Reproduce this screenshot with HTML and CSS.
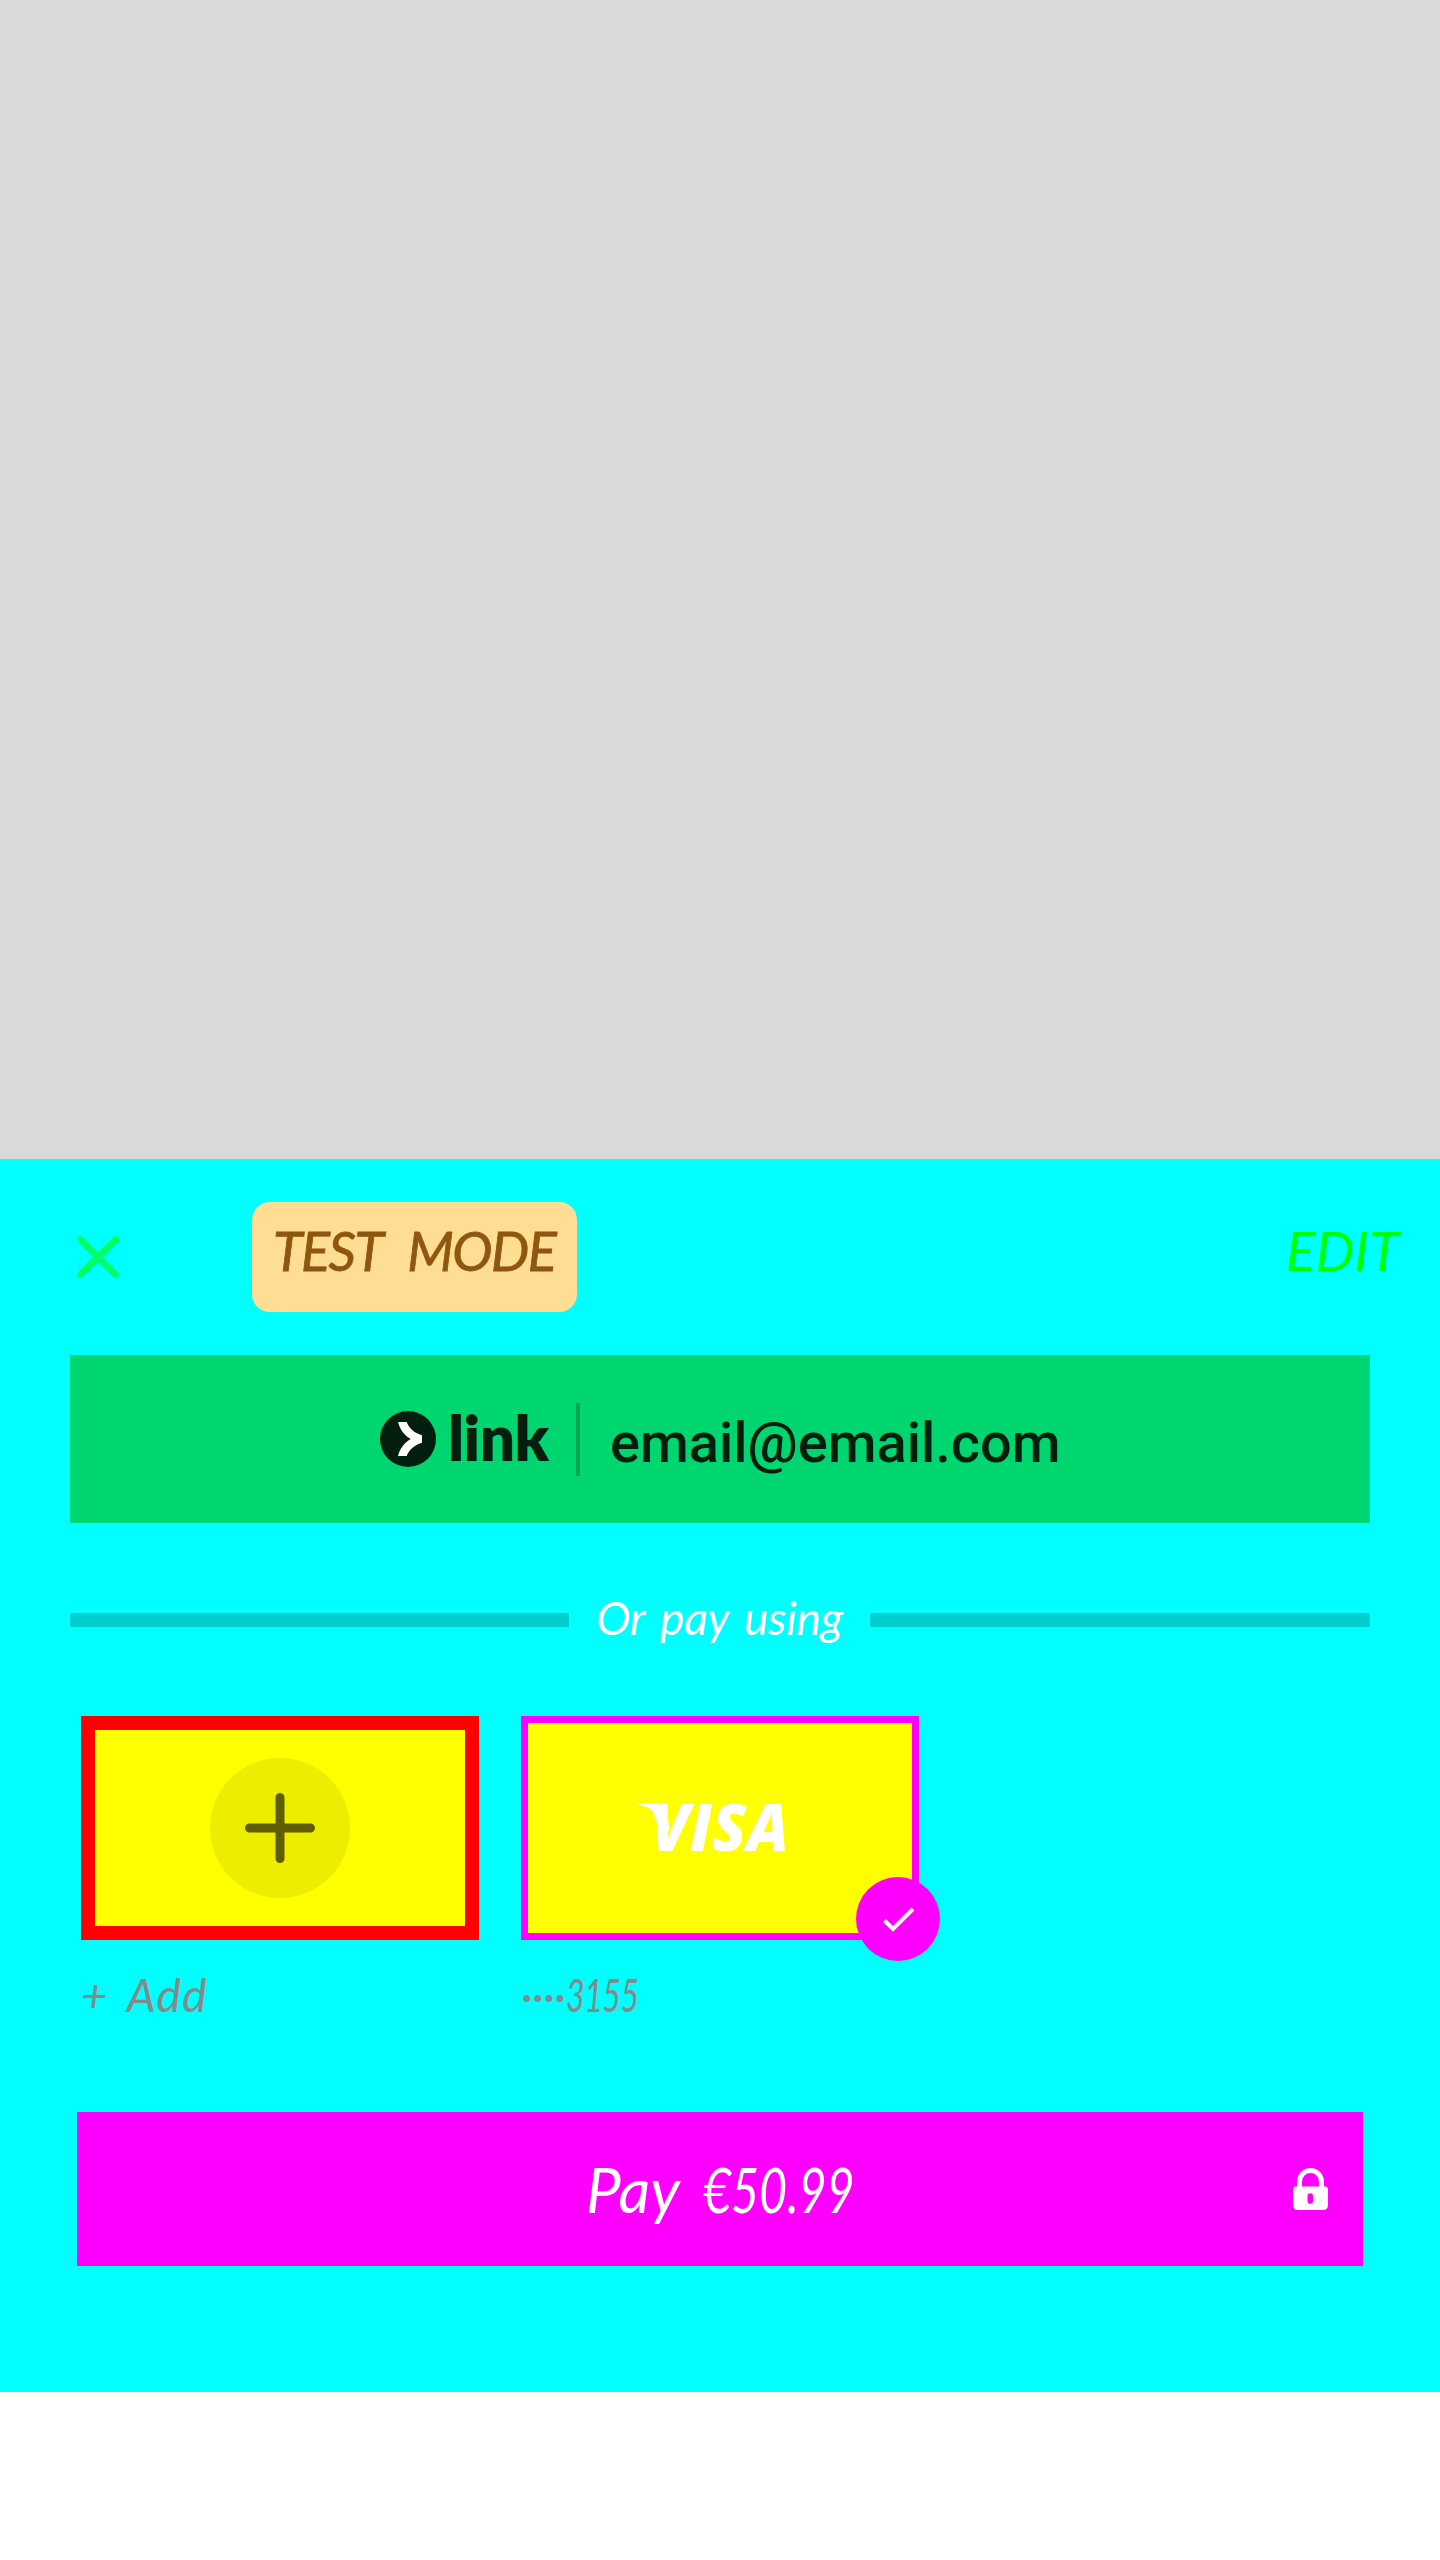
FILE: index.html
```html
<!DOCTYPE html>
<html lang="en">
<head>
<meta charset="utf-8">
<title>Payment sheet</title>
<link rel="stylesheet" href="styles.css">
</head>
<body>
<div class="scrim"></div>
<main class="sheet">
  <header class="topbar">
    <svg class="close" viewBox="0 0 42 42"><path d="M3.500 3.500 38.500 38.500M38.500 3.500 3.500 38.500"/></svg>
    <span class="badge script">TEST MODE</span>
    <span class="edit script">EDIT</span>
  </header>
  <div class="link-button">
    <svg class="link-mark" viewBox="0 0 56 56"><circle cx="28" cy="28" r="28" fill="#011e0f"/><path d="M18 11h8.700c2.300 6 7.300 11 15.300 13.300v7.400c-8 2.300-13 7.300-15.300 13.300H18c1.700-7 6-13 12.700-17C24 24 19.700 18 18 11z" fill="#fff"/></svg>
    <span class="link-word">link</span>
    <span class="link-rule"></span>
    <span class="email">email@email.com</span>
  </div>
  <div class="divider"><i class="line"></i><span class="or script">Or pay using</span><i class="line"></i></div>
  <div class="methods">
    <div class="method">
      <div class="card add">
        <svg class="plus" viewBox="0 0 140 140"><circle cx="70" cy="70" r="70" fill="#eded00"/><path d="M39.500 70h61M70 39.500v61"/></svg>
      </div>
      <span class="label label-add script">+ Add</span>
    </div>
    <div class="method">
      <div class="card selected">
        <svg class="visa" viewBox="0 0 152 50"><path d="M0 1H22Q27 1 28 7L32 28 22 28 15 10Q13 5 0 2.500z"/><text x="13" y="48.500" textLength="138" lengthAdjust="spacingAndGlyphs">VISA</text></svg>
        <svg class="check" viewBox="0 0 84 84"><circle cx="42" cy="42" r="42" fill="#f0f"/><path d="M28.500 43.500 37 52 57 32"/></svg>
      </div>
      <span class="label label-card script">····<span class="digits">3155</span></span>
    </div>
  </div>
  <div class="pay">
    <div class="pay-text script"><span>Pay</span><span class="amount">€50.99</span></div>
    <svg class="lock" viewBox="0 0 35 42"><path d="M6.500 20V13.500a11 11 0 0 1 22 0V20" fill="none" stroke="#fff" stroke-width="5"/><path fill="#fff" fill-rule="evenodd" d="M3 18.500H32q3 0 3 3V37q0 5-5 5H5q-5 0-5-5V21.500q0-3 3-3zM14.500 28v5a2.800 2.800 0 0 0 5.600 0v-5a2.800 2.800 0 0 0-5.600 0z"/></svg>
  </div>
</main>
</body>
</html>
```
FILE: styles.css
```css
* { box-sizing: border-box; }
body { margin: 0; width: 1440px; height: 2560px; background: #fff; }
svg { display: block; flex: none; }
.scrim { height: 1159px; background: #d9d9d9; }
.sheet { height: 1233px; background: #0ff; display: flex; flex-direction: column; }
.script { font-family: Lato, "Open Sans", sans-serif; font-style: italic; font-weight: 400; white-space: pre; line-height: 1; }
.topbar { height: 196px; padding: 0 41px 0 77px; display: flex; align-items: center; }
.close { width: 42px; height: 42px; fill: none; stroke: #0f6; stroke-width: 7; stroke-linecap: round; }
.badge { width: 325px; height: 110px; margin-left: 133px; padding: 22px 0 0 21px; border-radius: 18px; background: #ffdd93; color: #8f5611; font-size: 54px; letter-spacing: -1.5px; word-spacing: 15px; -webkit-text-stroke: 0.8px #8f5611; }
.edit { margin-left: auto; margin-top: -13px; color: #0f0; font-size: 55px; }
.link-button { height: 168px; margin: 0 70px; padding-left: 310px; background: #00d66f; color: #011e0f; display: flex; align-items: center; }
.link-mark { width: 56px; height: 56px; }
.link-word { width: 98px; margin: -4px 0 0 12px; font: 800 62px/1 Lato, sans-serif; letter-spacing: -0.5px; }
.link-rule { width: 4px; height: 73px; margin-left: 30px; background: #03a655; }
.email { margin-left: 30px; margin-top: 7px; font: 500 56px/1 Roboto, sans-serif; }
.divider { height: 193px; margin: 0 70px; padding-top: 1px; display: flex; align-items: center; }
.line { width: 499px; height: 14px; background: #00cdcd; }
.line:last-child { width: 500px; }
.or { flex: 1; margin-top: -4px; text-align: center; color: #fff; font-size: 46px; word-spacing: 5px; letter-spacing: -0.2px; }
.methods { height: 395px; padding: 0 81px; display: flex; gap: 42px; }
.method { width: 398px; }
.card { position: relative; height: 224px; background: #ff0; display: flex; align-items: center; justify-content: center; }
.add { border: 14px solid #f00; }
.selected { border: 7px solid #f0f; }
.plus { width: 140px; height: 140px; fill: none; stroke: #5e5e00; stroke-width: 9; stroke-linecap: round; }
.plus circle { stroke: none; }
.visa { width: 152px; height: 50px; margin: -2px 0 0 -13px; fill: #fff; overflow: visible; }
.visa text { font: italic 800 66px "Open Sans", sans-serif; }
.check { position: absolute; right: -28px; bottom: -28px; width: 84px; height: 84px; fill: none; stroke: #fff; stroke-width: 4; }
.check circle { stroke: none; }
.label { display: block; padding-top: 32px; color: #888; font-size: 46px; }
.label-add { word-spacing: 7px; letter-spacing: 1.3px; }
.label-card { letter-spacing: -0.7px; }
.digits { display: inline-block; transform: scaleX(0.7); transform-origin: left; }
.pay { height: 154px; margin: 1px 77px 0; padding: 0 35px 0 70px; background: #f0f; display: flex; align-items: center; }
.pay-text { flex: 1; padding-left: 439px; display: flex; gap: 23px; color: #fff; font-size: 62px; }
.amount { transform: scaleX(0.78); transform-origin: left; }
.lock { width: 35px; height: 42px; }
```
